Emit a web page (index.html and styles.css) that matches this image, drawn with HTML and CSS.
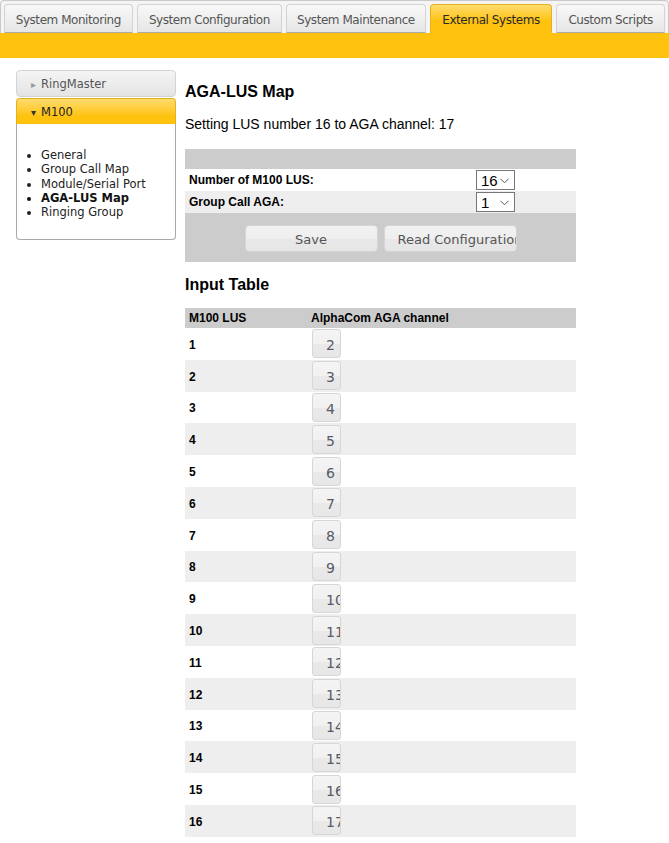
FILE: index.html
```html
<!DOCTYPE html>
<html>
<head>
<meta charset="utf-8">
<link rel="stylesheet" href="styles.css">
</head>
<body>
<div class="tabs">
  <div class="tab t1">System Monitoring</div>
  <div class="tab t2">System Configuration</div>
  <div class="tab t3">System Maintenance</div>
  <div class="tab t4 active">External Systems</div>
  <div class="tab t5">Custom Scripts</div>
</div>
<div class="band"></div>
<div class="main">
  <div class="sidebar">
    <div class="acc-head closed"><span class="tri">&#9656;</span>RingMaster</div>
    <div class="acc-head open"><span class="tri">&#9662;</span>M100</div>
    <div class="acc-body">
      <ul>
        <li>General</li>
        <li>Group Call Map</li>
        <li>Module/Serial Port</li>
        <li class="cur">AGA-LUS Map</li>
        <li>Ringing Group</li>
      </ul>
    </div>
  </div>
  <div class="content">
    <h2 class="title">AGA-LUS Map</h2>
    <p class="status">Setting LUS number 16 to AGA channel: 17</p>
    <div class="form">
      <div class="frow head"></div>
      <div class="frow">
        <div class="flabel">Number of M100 LUS:</div>
        <div class="fctl"><div class="sel"><span>16</span><svg width="9" height="6" viewBox="0 0 9 6"><path d="M0.5 0.8 L4.5 4.8 L8.5 0.8" fill="none" stroke="#555" stroke-width="1"/></svg></div></div>
      </div>
      <div class="frow alt">
        <div class="flabel">Group Call AGA:</div>
        <div class="fctl"><div class="sel"><span>1</span><svg width="9" height="6" viewBox="0 0 9 6"><path d="M0.5 0.8 L4.5 4.8 L8.5 0.8" fill="none" stroke="#555" stroke-width="1"/></svg></div></div>
      </div>
      <div class="frow buttons">
        <div class="btn">Save</div>
        <div class="btn">Read Configuration</div>
      </div>
    </div>
    <h2 class="title sub">Input Table</h2>
    <div class="itable">
      <div class="irow ihead"><div class="c1">M100 LUS</div><div class="c2">AlphaCom AGA channel</div></div>
      <div class="irow"><div class="c1">1</div><div class="c2"><div class="ibox">2</div></div></div>
      <div class="irow"><div class="c1">2</div><div class="c2"><div class="ibox">3</div></div></div>
      <div class="irow"><div class="c1">3</div><div class="c2"><div class="ibox">4</div></div></div>
      <div class="irow"><div class="c1">4</div><div class="c2"><div class="ibox">5</div></div></div>
      <div class="irow"><div class="c1">5</div><div class="c2"><div class="ibox">6</div></div></div>
      <div class="irow"><div class="c1">6</div><div class="c2"><div class="ibox">7</div></div></div>
      <div class="irow"><div class="c1">7</div><div class="c2"><div class="ibox">8</div></div></div>
      <div class="irow"><div class="c1">8</div><div class="c2"><div class="ibox">9</div></div></div>
      <div class="irow"><div class="c1">9</div><div class="c2"><div class="ibox">10</div></div></div>
      <div class="irow"><div class="c1">10</div><div class="c2"><div class="ibox">11</div></div></div>
      <div class="irow"><div class="c1">11</div><div class="c2"><div class="ibox">12</div></div></div>
      <div class="irow"><div class="c1">12</div><div class="c2"><div class="ibox">13</div></div></div>
      <div class="irow"><div class="c1">13</div><div class="c2"><div class="ibox">14</div></div></div>
      <div class="irow"><div class="c1">14</div><div class="c2"><div class="ibox">15</div></div></div>
      <div class="irow"><div class="c1">15</div><div class="c2"><div class="ibox">16</div></div></div>
      <div class="irow"><div class="c1">16</div><div class="c2"><div class="ibox">17</div></div></div>
    </div>
  </div>
</div>
</body>
</html>
```
FILE: styles.css
```css
html, body {
  margin: 0;
  background: #fff;
}
body {
  font-family: "Liberation Sans", Arial, sans-serif;
  color: #000;
}
.tabs {
  display: flex;
  gap: 4px;
  padding: 3px 3px 0;
  border: 1px solid #c9c9c9;
  border-bottom: 0;
  border-radius: 4px 4px 0 0;
  background: #f4f4f4;
  height: 29px;
}
.tab {
  box-sizing: border-box;
  height: 29px;
  font: 12px/15px "DejaVu Sans", Verdana, sans-serif;
  letter-spacing: -0.45px;
  color: #555;
  padding: 8px 0 5px;
  text-align: center;
  border: 1px solid #d3d3d3;
  border-bottom: 1px solid #aaa;
  border-radius: 4px 4px 0 0;
  background: linear-gradient(#f8f8f8, #e6e6e6);
  white-space: nowrap;
}
.t1 { width: 129px; }
.t2 { width: 146px; }
.t3 { width: 140px; }
.t4 { width: 123px; }
.t5 { width: 109px; }
.tab.active {
  color: #2a2a2a;
  border-color: #e3b21b;
  border-bottom-color: #fec20f;
  background: linear-gradient(#ffdc70, #fec20f 60%);
}
.band {
  height: 25px;
  background: #fec20f;
}
.main {
  display: flex;
  gap: 9px;
  padding: 12px 0 0 16px;
}
.sidebar {
  width: 160px;
  flex: none;
}
.acc-head {
  height: 25px;
  font: 11.5px/25px "DejaVu Sans", Verdana, sans-serif;
  padding-left: 14px;
  padding-top: 1px;
  box-sizing: content-box;
  display: flex;
  align-items: center;
}
.acc-head .tri {
  width: 10px;
  font-size: 10px;
}
.acc-head.closed {
  height: 24px;
  color: #555;
  border: 1px solid #d3d3d3;
  border-radius: 4px;
  background: linear-gradient(#f4f4f4, #e4e4e4);
}
.acc-head.closed .tri {
  color: #999;
}
.acc-head.open {
  height: 24px;
  margin-top: 1px;
  color: #222;
  border: 1px solid #e3b21b;
  border-bottom: 0;
  border-radius: 4px 4px 0 0;
  background: linear-gradient(#ffdc70, #fec20f 70%);
}
.acc-head.open .tri {
  color: #333;
}
.acc-body {
  border: 1px solid #aaa;
  border-top: 0;
  border-radius: 0 0 4px 4px;
  padding: 24px 0 20px;
}
.acc-body ul {
  margin: 0;
  padding-left: 24px;
  list-style: disc;
  font: 11.5px/14.3px "DejaVu Sans", Verdana, sans-serif;
  color: #222;
}
.acc-body li.cur {
  font-weight: bold;
  color: #111;
}
.content {
  width: 391px;
  flex: none;
}
.title {
  margin: 12px 0 0;
  font-size: 16px;
  line-height: 20px;
  font-weight: bold;
}
.status {
  margin: 13px 0 0;
  font-size: 14px;
  line-height: 18px;
}
.form {
  margin-top: 16px;
}
.frow {
  display: flex;
  height: 22px;
  background: #fff;
}
.frow.head {
  height: 20px;
  background: #ccc;
}
.frow.alt {
  background: #eee;
}
.flabel {
  width: 287px;
  padding-left: 4px;
  font-size: 12px;
  font-weight: bold;
  line-height: 22px;
}
.fctl {
  padding-top: 1px;
}
.sel {
  box-sizing: border-box;
  width: 39px;
  height: 20px;
  border: 1px solid #767676;
  background: #fff;
  display: flex;
  align-items: center;
  justify-content: space-between;
  padding: 0 5px 0 4px;
  font-size: 15px;
}
.sel svg {
  margin-top: 1px;
}
.frow.buttons {
  height: auto;
  background: #ccc;
  padding: 12px 0 10px;
  justify-content: center;
  gap: 6px;
}
.btn {
  box-sizing: border-box;
  width: 133px;
  height: 27px;
  padding: 1px 13px 0;
  border: 1px solid #d5d5d5;
  border-radius: 4px;
  background: linear-gradient(#f1f1f1 0%, #efefef 50%, #e8e8e8 51%, #e6e6e6 100%);
  font: 13px/26px "DejaVu Sans", Verdana, sans-serif;
  color: #555;
  text-align: center;
  white-space: nowrap;
  overflow: hidden;
}
.title.sub {
  margin-top: 13px;
}
.itable {
  margin-top: 13px;
}
.irow {
  display: flex;
  align-items: center;
  height: 31.8px;
  background: #fff;
}
.irow:nth-child(odd) {
  background: #eee;
}
.irow.ihead {
  height: 20px;
  background: #ccc;
}
.c1 {
  width: 122px;
  padding-left: 4px;
  padding-top: 2px;
  font-size: 12px;
  font-weight: bold;
}
.irow.ihead .c1 {
  padding-top: 0;
}
.c2 {
  font-size: 12px;
  font-weight: bold;
}
.ibox {
  box-sizing: border-box;
  width: 29px;
  height: 29px;
  margin-left: 1px;
  border: 1px solid #d6d6d6;
  border-radius: 3px;
  background: linear-gradient(#f4f4f4 0%, #f1f1f1 50%, #e9e9e9 51%, #e7e7e7 100%);
  padding: 5px 0 0 13px;
  font: 14px/20px "DejaVu Sans", Verdana, sans-serif;
  font-weight: normal;
  color: #555b66;
  white-space: nowrap;
  overflow: hidden;
}
```
